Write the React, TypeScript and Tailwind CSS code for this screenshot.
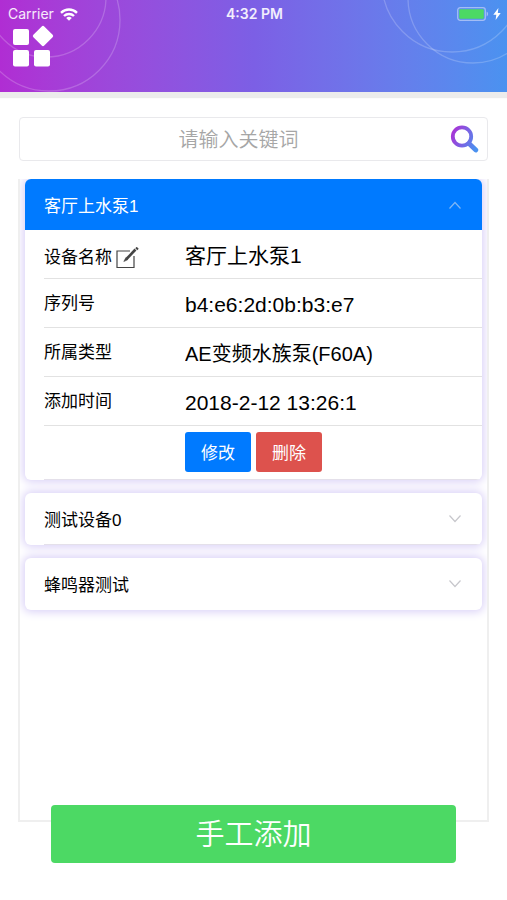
import { useState } from "react";
import clsx from "clsx";

const devices = [
  {
    name: "客厅上水泵1",
    serial: "b4:e6:2d:0b:b3:e7",
    type: "AE变频水族泵(F60A)",
    addedAt: "2018-2-12 13:26:1",
  },
  { name: "测试设备0", serial: "", type: "", addedAt: "" },
  { name: "蜂鸣器测试", serial: "", type: "", addedAt: "" },
];

type Device = (typeof devices)[number];

function StatusBar() {
  return (
    <div className="relative grid h-7 grid-cols-[1fr_auto_1fr] items-center pl-2 pr-1.5 font-['Inter','Liberation_Sans',sans-serif] text-sm text-white/90">
      <div className="flex items-center gap-1.5">
        <span>Carrier</span>
        <svg className="h-[13px] w-[18px]" viewBox="0 0 18 13" fill="none" stroke="#fff" strokeWidth="2.4" aria-hidden>
          <path d="M1 4.800a11.500 11.500 0 0 1 16 0" />
          <path d="M4 8a7.200 7.200 0 0 1 10 0" />
          <path d="M9 12.800 6.200 10a4 4 0 0 1 5.600 0z" fill="#fff" stroke="none" />
        </svg>
      </div>
      <span className="text-center font-semibold">4:32 PM</span>
      <div className="flex items-center justify-end gap-1">
        <svg className="h-[14px] w-8" viewBox="0 0 32 14" aria-hidden>
          <rect x="0.7" y="0.7" width="27.6" height="12.6" rx="2.5" fill="none" stroke="#a3bdf5" strokeWidth="1.3" />
          <rect x="2.2" y="2.2" width="24.6" height="9.6" rx="1" fill="#4cd964" />
          <path d="M29.6 4.6c2 .7 2 4.100 0 4.800z" fill="#a3bdf5" />
        </svg>
        <svg className="h-3 w-2" viewBox="0 0 8 12" fill="#fff" aria-hidden>
          <path d="M5.400 0 0.300 6.800h3L2.600 12 7.700 5H4.800z" />
        </svg>
      </div>
    </div>
  );
}

function Header() {
  return (
    <header className="relative h-[92px] bg-linear-to-r from-[#b02dd3] via-[#7c5fe5] to-[#4a92f0] shadow-[0_6px_1px_#ececec]">
      <div className="absolute inset-0 overflow-hidden" aria-hidden>
        <svg className="absolute left-0 top-0" width="130" height="92" fill="none" stroke="#fff" strokeOpacity="0.2" strokeWidth="1.3">
          <circle cx="46" cy="-3" r="60" />
          <circle cx="49" cy="20" r="71" />
        </svg>
        <svg className="absolute right-0 top-0" width="130" height="92" fill="none" stroke="#fff" strokeOpacity="0.2" strokeWidth="1.3">
          <circle cx="75" cy="-18" r="70" />
          <circle cx="96" cy="-2" r="65" />
        </svg>
      </div>
      <StatusBar />
      <button type="button" aria-label="菜单" className="relative ml-3 -mt-[3px] block">
        <svg className="block h-[42px] w-[42px]" viewBox="0 0 42 42" fill="#fff" aria-hidden>
          <rect x="1" y="4" width="16" height="16" rx="2" />
          <rect x="1" y="25" width="16" height="16.500" rx="2" />
          <rect x="22" y="25" width="16" height="16.500" rx="2" />
          <rect x="23.300" y="3.300" width="15.400" height="15.400" rx="1.800" transform="rotate(45 31 11)" />
        </svg>
      </button>
    </header>
  );
}

function SearchBar() {
  return (
    <form
      className="mx-[19px] mt-[25px] flex h-11 items-center rounded border border-[#e9e9ec] px-2"
      onSubmit={(e) => e.preventDefault()}
    >
      <input
        type="text"
        aria-label="关键词"
        placeholder="请输入关键词"
        className="h-full min-w-0 flex-1 pt-0.5 text-center text-[20px] font-[350] outline-none placeholder:text-[#a6a6a6]"
      />
      <button type="submit" aria-label="搜索">
        <svg className="block h-[30px] w-[30px]" viewBox="0 0 30 30" fill="none" stroke="url(#searchGradient)" aria-hidden>
          <defs>
            <linearGradient id="searchGradient" gradientUnits="userSpaceOnUse" x1="2" y1="10" x2="28" y2="22">
              <stop offset="0" stopColor="#a934d6" />
              <stop offset="1" stopColor="#4a92f0" />
            </linearGradient>
          </defs>
          <circle cx="13" cy="12.500" r="9.200" strokeWidth="3.800" />
          <path d="M20 19.500 26.800 26" strokeWidth="4.800" strokeLinecap="round" />
        </svg>
      </button>
    </form>
  );
}

function EditIcon() {
  return (
    <svg className="block h-[22px] w-[23px]" viewBox="0 0 23 22" fill="none" stroke="#444" strokeWidth="1.200" aria-hidden>
      <path d="M14 4H1v16.500h17V9" />
      <path d="M19.500 2.500 10.500 12" strokeWidth="2.600" />
      <path d="M9.800 10.800 7.800 14.500l3.800-1.700z" fill="#444" strokeWidth="0.600" />
      <path d="M20 0.500 22 2.500" strokeWidth="2" />
    </svg>
  );
}

function Field({ label, value, editable = false, small = false }: { label: string; value: string; editable?: boolean; small?: boolean }) {
  return (
    <div className="grid h-[49px] grid-cols-[141px_1fr] items-center border-b border-[#e2e2e2] pt-0.5">
      <dt className={clsx("flex items-center gap-1 text-[17px]", editable && "pt-1.5")}>
        {label}
        {editable && (
          <button type="button" aria-label="编辑设备名称">
            <EditIcon />
          </button>
        )}
      </dt>
      <dd className={clsx("truncate pt-0.5", small ? "text-[20px]" : "text-[21px]")}>{value}</dd>
    </div>
  );
}

function DevicePanel({ device, open, onToggle }: { device: Device; open: boolean; onToggle: () => void }) {
  return (
    <section className="group overflow-hidden rounded-md bg-white shadow-[0_0_10px_2px_#d9d0f7]">
      <button
        type="button"
        onClick={onToggle}
        aria-expanded={open}
        className={clsx(
          "flex h-[51px] w-full items-center justify-between pl-[19px] pr-5 text-left text-[17px]",
          open ? "bg-[#007aff] text-white" : "text-black"
        )}
      >
        <span className="pt-1">{device.name}</span>
        <svg
          className={clsx("h-[14px] w-[14px]", open ? "rotate-180 text-[#7db6f5]" : "text-[#c7c7cc]")}
          viewBox="0 0 14 14"
          fill="none"
          stroke="currentColor"
          strokeWidth="1.200"
          aria-hidden
        >
          <path d="M1.500 3.500 7 9.500l5.500-6" />
        </svg>
      </button>
      <div className="ml-[19px] border-b border-[#e4e0ea] group-last:border-transparent">
        {open && (
          <>
            <dl>
              <Field label="设备名称" value={device.name} editable />
              <Field label="序列号" value={device.serial} />
              <Field label="所属类型" value={device.type} small />
              <Field label="添加时间" value={device.addedAt} />
            </dl>
            <div className="flex gap-[5px] pt-[6px] pb-[7px] pl-[141px] text-[17px] text-white">
              <button type="button" className="h-10 w-[66px] rounded-[3px] bg-[#007aff] pt-1">
                修改
              </button>
              <button type="button" className="h-10 w-[66px] rounded-[3px] bg-[#dd524d] pt-1">
                删除
              </button>
            </div>
          </>
        )}
      </div>
    </section>
  );
}

export default function App() {
  const [openIndex, setOpenIndex] = useState(0);

  return (
    <div className="min-h-screen bg-white pb-9 font-['Liberation_Sans','Noto_Sans_CJK_SC',sans-serif] text-black" lang="zh-CN">
      <Header />
      <SearchBar />
      <main className="mx-[18px] mt-[18px] flex min-h-[643px] flex-col gap-[13px] overflow-hidden border-x-2 border-b-2 border-[#efefef] px-[5px] pb-8">
        {devices.map((device, i) => (
          <DevicePanel
            key={device.name}
            device={device}
            open={openIndex === i}
            onToggle={() => setOpenIndex(openIndex === i ? -1 : i)}
          />
        ))}
      </main>
      <div className="relative -mt-[17px] px-[51px]">
        <button type="button" className="h-[58px] w-full rounded bg-[#4cd964] pt-1 text-[29px] font-[350] text-white">
          手工添加
        </button>
      </div>
    </div>
  );
}
